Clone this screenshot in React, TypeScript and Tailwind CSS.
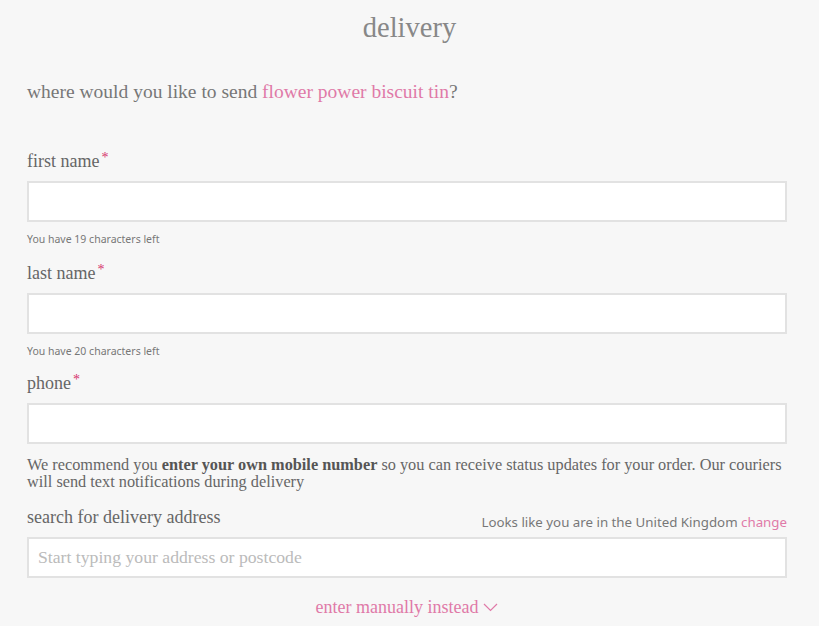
import { useState } from "react";

const serif = "font-['Liberation_Serif',serif]";
const sans = "font-['Noto_Sans',sans-serif]";

function Field({ label, left }: { label: string; left?: number }) {
  const [value, setValue] = useState("");
  const max = left ?? 20;
  return (
    <div className="flex flex-col">
      <label className={`${serif} text-[18px] leading-[20px] text-[#666] h-[20px]`}>
        {label}
        <span className="text-[#d6336c] text-[14px] relative -top-[5px] ml-[2px]">*</span>
      </label>
      <input
        value={value}
        onChange={e => setValue(e.target.value)}
        className="mt-[10px] h-[41px] w-full bg-white border-2 border-[#e2e2e2] outline-none px-2"
      />
      {left !== undefined && (
        <p className={`${sans} text-[10.5px] leading-[14px] text-[#777] mt-[10px]`}>
          You have {max - value.length} characters left
        </p>
      )}
    </div>
  );
}

export default function App() {
  return (
    <div className="min-h-screen bg-[#f7f7f7] px-[27px] pb-6 w-[819px] h-[626px] overflow-hidden">
      <h1 className={`${serif} text-center text-[28.5px] leading-[32px] text-[#888] pt-[12px]`}>delivery</h1>

      <p className={`${serif} text-[19.5px] leading-[22px] text-[#777] mt-[37px]`}>
        where would you like to send <span className="text-[#e07aa8]">flower power biscuit tin</span>?
      </p>

      <div className="mt-[48px] w-[760px] flex flex-col">
        <Field label="first name" left={19} />
        <div className="mt-[17px]">
          <Field label="last name" left={20} />
        </div>
        <div className="mt-[15px]">
          <Field label="phone" />
        </div>
        <p className={`${serif} text-[16.3px] leading-[17px] text-[#666] mt-[12px]`}>
          We recommend you <b className="font-bold text-[#555]">enter your own mobile number</b> so you can receive status updates for your order. Our couriers will send text notifications during delivery
        </p>

        <div className="mt-[17px] flex items-end justify-between">
          <span className={`${serif} text-[18px] leading-[20px] text-[#666]`}>search for delivery address</span>
          <span className={`${sans} text-[13.3px] leading-[16px] text-[#777] mb-[-3px]`}>
            Looks like you are in the United Kingdom <span className="text-[#e07aa8]">change</span>
          </span>
        </div>
        <input
          placeholder="Start typing your address or postcode"
          className={`${serif} mt-[10px] h-[41px] w-full bg-white border-2 border-[#e2e2e2] outline-none px-[9px] text-[17.7px] text-[#555] placeholder:text-[#bbb]`}
        />

        <button className={`${serif} mt-[19px] self-center flex items-center gap-[5px] text-[18px] leading-[20px] text-[#e07aa8]`}>
          enter manually instead
          <svg width="15" height="9" viewBox="0 0 15 9" fill="none" stroke="#e07aa8" strokeWidth="1.2">
            <path d="M1 1l6.5 6.5L14 1" />
          </svg>
        </button>
      </div>
    </div>
  );
}
